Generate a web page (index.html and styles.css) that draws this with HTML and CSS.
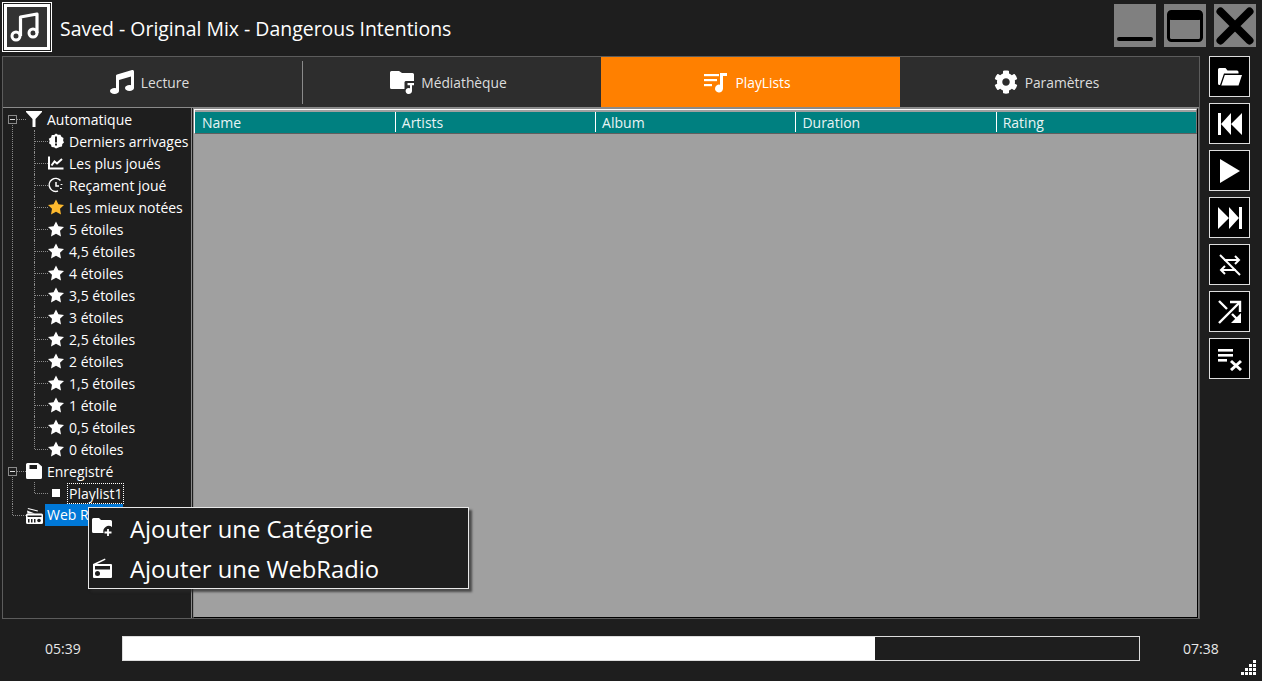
FILE: index.html
```html
<!DOCTYPE html>
<html lang="fr">
<head>
    <meta charset="UTF-8">
    <meta name="viewport" content="width=device-width, initial-scale=1.0">
    <title>Saved - Original Mix - Dangerous Intentions</title>
    <link rel="stylesheet" href="styles.css">
</head>
<body>

    <svg class="sprites" width="0" height="0">
        <symbol id="i-music" viewBox="0 0 512 512"><path d="M511.99 32.01c0-21.71-21.1-37.01-41.6-30.51L150.4 96c-13.3 4.2-22.4 16.5-22.4 30.5v261.42c-10.05-2.38-20.72-3.92-32-3.92-53.02 0-96 28.65-96 64s42.98 64 96 64 96-28.65 96-64V214.31l256-75.02v184.63c-10.05-2.38-20.72-3.92-32-3.92-53.02 0-96 28.65-96 64s42.98 64 96 64 96-28.65 96-64l-.01-351.99z"/></symbol>
        <symbol id="i-gear" viewBox="0 0 512 512"><path d="M487.4 315.7l-42.6-24.6c4.3-23.2 4.3-47 0-70.2l42.6-24.6c4.9-2.8 7.1-8.6 5.5-14-11.1-35.6-30-67.8-54.7-94.6-3.8-4.1-10-5.1-14.8-2.3L380.8 110c-17.9-15.4-38.5-27.3-60.8-35.1V25.8c0-5.6-3.9-10.5-9.4-11.7-36.7-8.2-74.3-7.8-109.2 0-5.5 1.2-9.4 6.1-9.4 11.7V75c-22.2 7.9-42.8 19.8-60.8 35.1L88.7 85.5c-4.9-2.8-11-1.9-14.8 2.3-24.7 26.7-43.6 58.9-54.7 94.6-1.7 5.4.6 11.2 5.5 14L67.3 221c-4.3 23.2-4.3 47 0 70.2l-42.6 24.6c-4.9 2.8-7.1 8.6-5.5 14 11.1 35.6 30 67.8 54.7 94.6 3.8 4.1 10 5.1 14.8 2.3l42.6-24.6c17.9 15.4 38.5 27.3 60.8 35.1v49.2c0 5.6 3.9 10.5 9.4 11.7 36.7 8.2 74.3 7.8 109.2 0 5.5-1.2 9.4-6.1 9.4-11.7v-49.2c22.2-7.9 42.8-19.8 60.8-35.1l42.6 24.6c4.9 2.8 11 1.9 14.8-2.3 24.7-26.7 43.6-58.9 54.7-94.6 1.5-5.5-.7-11.3-5.6-14.1zM256 336c-44.1 0-80-35.9-80-80s35.9-80 80-80 80 35.9 80 80-35.9 80-80 80z"/></symbol>
        <symbol id="i-star" viewBox="16 0 544 512"><path d="M288 0 371 165 560 190 424 318 458 512 288 420 118 512 152 318 16 190 205 165z"/></symbol>
    </svg>

    <header class="titlebar">
        <div class="app-logo">
            <svg viewBox="0 0 40 40" width="40" height="40" fill="none" stroke="#fff" stroke-width="3" stroke-linejoin="round">
                <circle cx="9" cy="29" r="4"/>
                <circle cx="26" cy="26" r="4"/>
                <path d="M13.500 29V10L30 7V26" stroke-width="3.200"/>
            </svg>
        </div>
        <h1 class="song-title">Saved - Original Mix - Dangerous Intentions</h1>
        <div class="window-buttons">
            <button class="win-btn"><svg viewBox="0 0 42 42" width="42" height="42"><rect x="3" y="32" width="36" height="4" rx="2"/></svg></button>
            <button class="win-btn"><svg viewBox="0 0 42 42" width="42" height="42"><rect x="4.500" y="6.500" width="33" height="29" rx="3" fill="none" stroke="#000" stroke-width="3"/><rect x="4" y="6" width="34" height="9" rx="3"/></svg></button>
            <button class="win-btn"><svg viewBox="0 0 42 42" width="42" height="42"><path d="M6.500 6.500 35.500 35.500M35.500 6.500 6.500 35.500" stroke="#000" stroke-width="8" stroke-linecap="round"/></svg></button>
        </div>
    </header>

    <div class="middle">
        <main class="main-panel">
            <nav class="tabs">
                <div class="tab tab-sep">
                    <svg width="24" height="24" fill="#fff"><use href="#i-music"/></svg>
                    <span>Lecture</span>
                </div>
                <div class="tab">
                    <svg viewBox="0 0 24 24" width="24" height="24" fill="#fff"><path d="M1.500 1h7.500l3 2h10.500a1.500 1.500 0 0 1 1.500 1.500V11h-8.500l-1 1V19H1.500a1.500 1.500 0 0 1-1.500-1.500V2.500A1.500 1.500 0 0 1 1.500 1z"/><path d="M17.500 13H24v2.200h-2V21a3.200 3 0 1 1-2-2.800V15.200h-2.500z"/></svg>
                    <span>Médiathèque</span>
                </div>
                <div class="tab tab-active">
                    <svg viewBox="0 0 24 24" width="24" height="24" fill="#fff"><rect y="4" width="15" height="2.200"/><rect y="9" width="13" height="2.200"/><rect y="14" width="8" height="2.200"/><path d="M16 3h7v3h-4v12.500a4 4 0 1 1-3-3.800z"/></svg>
                    <span>PlayLists</span>
                </div>
                <div class="tab">
                    <svg width="24" height="24" fill="#fff"><use href="#i-gear"/></svg>
                    <span>Paramètres</span>
                </div>
            </nav>

            <div class="content">
                <ul class="tree">
                    <li class="root">
                        <div class="row">
                            <span class="expander"></span>
                            <svg class="ico" viewBox="0 0 16 16" fill="#fff"><path d="M0 0h16v1L9.500 8v8h-3V8L0 1z"/></svg>
                            <span class="label">Automatique</span>
                        </div>
                        <ul class="branch">
                            <li>
                                <div class="row">
                                    <svg class="ico" viewBox="0 0 16 16"><path fill="#fff" d="M8 .5l2 1.300 2.400-.1 1 2.100 2.100 1.200-.4 2.500.9 2-1.700 1.600-.3 2.400-2.400.4L8 15.500l-2-1.200-2.400-.2-.6-2.300L1 10.200l.6-2.300L.8 5.700 3 4.400l.8-2.300 2.300-.1z"/><rect x="7" y="3.500" width="2" height="6" fill="#1e1e1e"/><rect x="7" y="10.500" width="2" height="2" fill="#1e1e1e"/></svg>
                                    <span class="label">Derniers arrivages</span>
                                </div>
                            </li>
                            <li>
                                <div class="row">
                                    <svg class="ico" viewBox="0 0 16 16" fill="none" stroke="#fff" stroke-width="2"><path d="M1 1.500V13.500H15.500"/><path d="M3.500 10.500 6.500 6.500 9 8.500 14 4"/></svg>
                                    <span class="label">Les plus joués</span>
                                </div>
                            </li>
                            <li>
                                <div class="row">
                                    <svg class="ico" viewBox="0 0 16 16" fill="none" stroke="#fff" stroke-width="1.500"><path d="M12.500 3.500A6.500 6.500 0 1 0 10 14"/><path d="M8 5v4h3"/><path d="M13.500 7v1M13 11v1" stroke-width="1.800"/></svg>
                                    <span class="label">Reçament joué</span>
                                </div>
                            </li>
                            <li>
                                <div class="row">
                                    <svg class="ico" fill="#fdb92e"><use href="#i-star"/></svg>
                                    <span class="label">Les mieux notées</span>
                                </div>
                            </li>
                            <li><div class="row"><svg class="ico" fill="#fff"><use href="#i-star"/></svg><span class="label">5 étoiles</span></div></li>
                            <li><div class="row"><svg class="ico" fill="#fff"><use href="#i-star"/></svg><span class="label">4,5 étoiles</span></div></li>
                            <li><div class="row"><svg class="ico" fill="#fff"><use href="#i-star"/></svg><span class="label">4 étoiles</span></div></li>
                            <li><div class="row"><svg class="ico" fill="#fff"><use href="#i-star"/></svg><span class="label">3,5 étoiles</span></div></li>
                            <li><div class="row"><svg class="ico" fill="#fff"><use href="#i-star"/></svg><span class="label">3 étoiles</span></div></li>
                            <li><div class="row"><svg class="ico" fill="#fff"><use href="#i-star"/></svg><span class="label">2,5 étoiles</span></div></li>
                            <li><div class="row"><svg class="ico" fill="#fff"><use href="#i-star"/></svg><span class="label">2 étoiles</span></div></li>
                            <li><div class="row"><svg class="ico" fill="#fff"><use href="#i-star"/></svg><span class="label">1,5 étoiles</span></div></li>
                            <li><div class="row"><svg class="ico" fill="#fff"><use href="#i-star"/></svg><span class="label">1 étoile</span></div></li>
                            <li><div class="row"><svg class="ico" fill="#fff"><use href="#i-star"/></svg><span class="label">0,5 étoiles</span></div></li>
                            <li><div class="row"><svg class="ico" fill="#fff"><use href="#i-star"/></svg><span class="label">0 étoiles</span></div></li>
                        </ul>
                    </li>
                    <li class="root">
                        <div class="row">
                            <span class="expander"></span>
                            <svg class="ico" viewBox="0 0 16 16"><path fill="#fff" d="M1.500 0H12l4 3.500V14.500a1.500 1.500 0 0 1-1.500 1.500h-13A1.500 1.500 0 0 1 0 14.500V1.500A1.500 1.500 0 0 1 1.500 0z"/><rect x="3.500" y="2" width="7.500" height="4" fill="#1e1e1e"/></svg>
                            <span class="label">Enregistré</span>
                        </div>
                        <ul class="branch">
                            <li>
                                <div class="row">
                                    <svg class="ico" viewBox="0 0 16 16" fill="#fff"><rect x="4" y="4" width="8" height="8"/></svg>
                                    <span class="label label-focus">Playlist1</span>
                                </div>
                            </li>
                        </ul>
                    </li>
                    <li class="root">
                        <div class="row">
                            <svg class="ico ico-root" viewBox="0 0 17 17" fill="#fff">
                                <path d="M2 1 12 3.500l-.3 1L1.700 2zM1 3.500 9 6.500H1.500z"/>
                                <path d="M1.500 6.500h14A1.500 1.500 0 0 1 17 8v7.500a1.500 1.500 0 0 1-1.500 1.500h-14A1.500 1.500 0 0 1 0 15.500V8a1.500 1.500 0 0 1 1.500-1.500z"/>
                                <rect x="1.500" y="8.500" width="14" height="1.500" fill="#1e1e1e"/>
                                <rect x="2" y="12" width="1.500" height="3.500" fill="#1e1e1e"/>
                                <rect x="5" y="12" width="1.500" height="3.500" fill="#1e1e1e"/>
                                <rect x="8" y="12" width="1.500" height="3.500" fill="#1e1e1e"/>
                                <circle cx="13" cy="13.500" r="1.800" fill="#1e1e1e"/>
                            </svg>
                            <span class="label label-selected">Web Radio</span>
                        </div>
                    </li>
                </ul>

                <section class="grid">
                    <div class="grid-head">
                        <div class="col">Name</div>
                        <div class="col">Artists</div>
                        <div class="col">Album</div>
                        <div class="col">Duration</div>
                        <div class="col">Rating</div>
                    </div>
                </section>
            </div>
        </main>

        <aside class="side-buttons">
            <button class="side-btn"><svg viewBox="0 0 24 24" width="24" height="24" fill="#fff"><path d="M0 4.500A1.500 1.500 0 0 1 1.500 3h6l2 2.500H19A1.500 1.500 0 0 1 20.500 7v1.500H6L2 20H1.500A1.500 1.500 0 0 1 0 18.500z"/><path d="M6.800 10H24l-3.500 10.500H3.300z"/></svg></button>
            <button class="side-btn"><svg viewBox="0 0 24 24" width="24" height="24" fill="#fff"><rect x="0" y="1" width="3" height="22"/><path d="M3 12 13 1v22zM13 12 24 1v22z"/></svg></button>
            <button class="side-btn"><svg viewBox="0 0 24 24" width="24" height="24" fill="#fff"><path d="M2 0 22 12 2 24z"/></svg></button>
            <button class="side-btn"><svg viewBox="0 0 24 24" width="24" height="24" fill="#fff"><rect x="21" y="1" width="3" height="22"/><path d="M21 12 11 1v22zM11 12 0 1v22z"/></svg></button>
            <button class="side-btn"><svg viewBox="0 0 24 24" width="24" height="24" fill="none" stroke="#fff" stroke-width="2"><path d="M2 2 22 22"/><path d="M6 7H21M17 3l4 4-4 4"/><path d="M18 17H3M7 13l-4 4 4 4"/></svg></button>
            <button class="side-btn"><svg viewBox="0 0 24 24" width="24" height="24" fill="none" stroke="#fff" stroke-width="2.400"><path d="M1 23 22 2"/><path d="M12 2H22V12"/><path d="M1 1 9 9M14 14 22 22"/><path d="M23 13V23H13z" fill="#fff" stroke="none"/></svg></button>
            <button class="side-btn"><svg viewBox="0 0 24 24" width="24" height="24" fill="#fff"><rect x="0" y="2" width="15" height="2.600"/><rect x="0" y="7" width="15" height="2.600"/><rect x="0" y="12" width="9" height="2.600"/><path d="M13 14 23 23M23 14 13 23" stroke="#fff" stroke-width="3"/></svg></button>
        </aside>
    </div>

    <footer class="player-bar">
        <span class="time time-left">05:39</span>
        <div class="progress"><div class="progress-fill" style="width: 74%"></div></div>
        <span class="time time-right">07:38</span>
    </footer>

    <div class="context-menu">
        <div class="menu-item">
            <svg viewBox="0 0 20 20" width="20" height="20" fill="#fff"><path d="M0 1.500A1.500 1.500 0 0 1 1.500 0h5.500l2 2h9.500A1.500 1.500 0 0 1 20 3.500V9a5.500 5.500 0 0 0-8.500 6H1.500A1.500 1.500 0 0 1 0 13.500z"/><path d="M16 11v7M12.500 14.500h7" stroke="#fff" stroke-width="1.800"/></svg>
            <span>Ajouter une Catégorie</span>
        </div>
        <div class="menu-item">
            <svg viewBox="0 0 20 20" width="20" height="20" fill="#fff">
                <path d="M1 6 13 .5l.5 1.200L5 6h14a1 1 0 0 1 1 1v12a1 1 0 0 1-1 1H2a1 1 0 0 1-1-1V7z"/>
                <rect x="3" y="8" width="15" height="3.500" fill="#1e1e1e"/>
                <circle cx="5.500" cy="15.500" r="2.500" fill="#1e1e1e"/>
            </svg>
            <span>Ajouter une WebRadio</span>
        </div>
    </div>

    <svg class="grip" viewBox="0 0 15 15" width="15" height="15" fill="#fff">
        <rect x="12" y="0" width="3" height="3"/>
        <rect x="8" y="4" width="3" height="3"/><rect x="12" y="4" width="3" height="3"/>
        <rect x="4" y="8" width="3" height="3"/><rect x="8" y="8" width="3" height="3"/><rect x="12" y="8" width="3" height="3"/>
        <rect x="0" y="12" width="3" height="3"/><rect x="4" y="12" width="3" height="3"/><rect x="8" y="12" width="3" height="3"/><rect x="12" y="12" width="3" height="3"/>
    </svg>

</body>
</html>
```

FILE: styles.css
```css
* {
    box-sizing: border-box;
}

html, body {
    margin: 0;
    padding: 0;
}

body {
    position: relative;
    width: 1262px;
    height: 681px;
    overflow: hidden;
    background-color: #1e1e1e;
    color: #fff;
    font-family: 'Open Sans', 'Noto Sans', sans-serif;
}

.sprites {
    position: absolute;
}

button {
    padding: 0;
    border: none;
    display: flex;
    align-items: center;
    justify-content: center;
}

/* title bar */
.titlebar {
    display: flex;
    align-items: center;
    height: 56px;
    padding-left: 2px;
}

.app-logo {
    width: 50px;
    height: 50px;
    margin-bottom: 2px;
    display: flex;
    align-items: center;
    justify-content: center;
    background-color: #333;
    border: 1px solid #fff;
    box-shadow: inset 0 0 0 1px #1e1e1e, inset 0 0 0 4px #fff;
}

.song-title {
    margin: 1px 0 0 8px;
    font-size: 19.450px;
    font-weight: 400;
}

.window-buttons {
    display: flex;
    gap: 8px;
    margin-left: auto;
    margin-right: 6px;
    margin-bottom: 5px;
}

.win-btn {
    width: 42px;
    height: 43px;
    background-color: #808080;
    filter: blur(0.5px);
}

/* middle */
.middle {
    display: flex;
    height: 563px;
}

.main-panel {
    display: flex;
    flex-direction: column;
    width: 1198px;
    margin-left: 2px;
    border: 1px solid #5c5c5c;
}

.tabs {
    display: flex;
    height: 51px;
    background-color: #2d2d2d;
    border-bottom: 1px solid #8a8a8a;
}

.tab {
    flex: 1;
    display: flex;
    align-items: center;
    justify-content: center;
    gap: 7px;
    padding-right: 6px;
    color: #ddd;
    font-size: 13.800px;
}

.tab-sep {
    position: relative;
}

.tab-sep::after {
    content: "";
    position: absolute;
    right: -1px;
    top: 4px;
    bottom: 3px;
    width: 1px;
    background-color: #8a8a8a;
}

.tab-active {
    background-color: #ff8000;
    color: #fff;
}

.content {
    flex: 1;
    display: flex;
    min-height: 0;
}

/* tree */
.tree {
    flex: none;
    width: 189px;
    margin: 0;
    padding: 0;
    list-style: none;
    border-right: 1px solid #8a8a8a;
    overflow: hidden;
}

.tree ul {
    margin: 0;
    padding: 0;
    list-style: none;
}

.root, .branch > li {
    position: relative;
}

/* dotted guide lines */
.root::before {
    content: "";
    position: absolute;
    left: 9px;
    top: 11px;
    bottom: 0;
    border-left: 1px dotted #8a8a8a;
}

.root:last-child::before {
    top: 0;
    bottom: auto;
    height: 11px;
}

.branch > li::before {
    content: "";
    position: absolute;
    left: 31px;
    top: 0;
    bottom: 0;
    border-left: 1px dotted #8a8a8a;
}

.branch > li:last-child::before {
    bottom: 11px;
}

.row {
    position: relative;
    display: flex;
    align-items: center;
    height: 22px;
    font-size: 14px;
    white-space: nowrap;
}

.row::before {
    content: "";
    position: absolute;
    top: 11px;
    border-top: 1px dotted #8a8a8a;
}

.root > .row {
    padding-left: 23px;
}

.root > .row::before {
    left: 10px;
    width: 13px;
}

.branch .row {
    padding-left: 45px;
}

.branch .row::before {
    left: 32px;
    width: 13px;
}

.expander {
    position: absolute;
    left: 5px;
    top: 7px;
    z-index: 1;
    width: 9px;
    height: 9px;
    background-color: #1e1e1e;
    border: 1px solid #8a8a8a;
}

.expander::after {
    content: "";
    position: absolute;
    left: 1px;
    top: 3px;
    width: 5px;
    height: 1px;
    background-color: #ddd;
}

.ico {
    flex: none;
    width: 16px;
    height: 16px;
}

.ico-root {
    width: 17px;
    height: 17px;
}

.label {
    margin-left: 4px;
    padding: 1px 1px 0;
    line-height: 20px;
}

.label-focus {
    margin-left: 3px;
    padding: 1px 2px 0;
    outline: 1px dotted #fff;
    outline-offset: -1px;
}

.label-selected {
    width: 78px;
    height: 22px;
    margin-left: 2px;
    padding-left: 2px;
    background-color: #0078d7;
}

/* grid */
.grid {
    flex: 1;
    min-width: 0;
    margin-left: 1px;
    margin-right: 1px;
    border: 1px solid #000;
    border-left-color: #8a8a8a;
    border-top-color: #8a8a8a;
    background-color: #a0a0a0;
    box-shadow: 1px 0 0 #777;
}

.grid-head {
    display: flex;
    height: 25px;
    padding-top: 2px;
    border-top: 1px solid #fff;
    border-left: 1px solid #fff;
    border-right: 1px solid #777;
    background-color: #008080;
    background-clip: content-box;
    border-bottom: 1px solid #5f5f5f;
    font-size: 14px;
    color: #e8f4f4;
}

.col {
    width: 200.500px;
    padding-left: 6px;
    border-left: 1px solid #fff;
    line-height: 21px;
    margin-bottom: 1px;
}

.col:first-child {
    width: 200px;
    padding-left: 7px;
    border-left: none;
}

/* side buttons */
.side-buttons {
    display: flex;
    flex-direction: column;
    gap: 6px;
    margin-left: 9px;
}

.side-btn {
    width: 41px;
    height: 41px;
    background-color: #000;
    border: 1px solid #ddd;
}

/* player bar */
.player-bar {
    display: flex;
    align-items: center;
    height: 62px;
    padding: 0 0 4px 45px;
}

.time {
    font-size: 14px;
    color: #e8e8e8;
}

.time-left {
    width: 77px;
}

.time-right {
    margin-left: 43px;
}

.progress {
    width: 1018px;
    height: 25px;
    border: 1px solid #ddd;
}

.progress-fill {
    height: 100%;
    background-color: #fff;
}

/* context menu */
.context-menu {
    position: absolute;
    left: 88px;
    top: 507px;
    width: 381px;
    height: 82px;
    background-color: #1e1e1e;
    border: 1px solid #e8e8e8;
    box-shadow: 3px 3px 2px rgba(40, 40, 40, 0.7);
}

.menu-item {
    display: flex;
    align-items: center;
    gap: 18px;
    height: 40px;
    padding-left: 3px;
    font-size: 23.800px;
}

.menu-item span {
    padding-top: 1px;
}

.grip {
    position: absolute;
    left: 1241px;
    top: 660px;
}
```
